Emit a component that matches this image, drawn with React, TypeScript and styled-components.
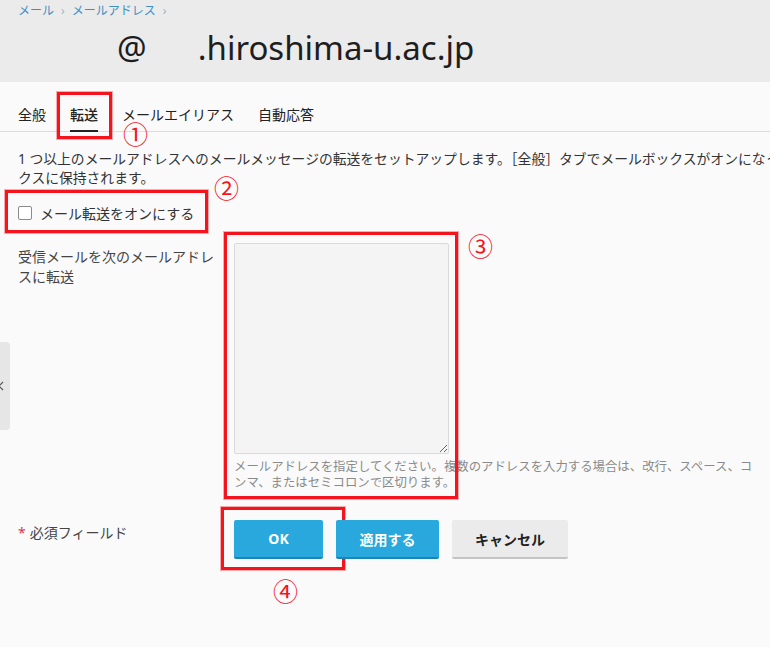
import React from 'react'
import styled, { createGlobalStyle } from 'styled-components';

const jp = `"Noto Sans", "Noto Sans CJK JP", sans-serif`;
const red = '#f5141e';
const blue = '#28a8dc';

const GlobalStyle = createGlobalStyle`
  html, body {
    margin: 0;
    padding: 0;
    background: #fafafa;
    overflow: hidden;
  }
  body {
    font-family: ${jp};
    color: #333;
  }
`;

const PageWrapper = styled.div`
  position: relative;
  width: 770px;
  height: 647px;
  overflow: hidden;
`;

const Header = styled.div`
  background: #ebebeb;
  height: 82px;
  padding: 3px 18px 0;
  box-sizing: border-box;
`;

const Breadcrumb = styled.div`
  display: flex;
  gap: 7px;
  font-size: 12px;
  line-height: 16px;
  color: #3f8fc4;
`;

const Crumb = styled.span<{ $sep?: boolean }>`
  color: ${p => p.$sep ? '#9ab4c8' : '#3f8fc4'};
`;

const Title = styled.h1`
  margin: 9px 0 0 99px;
  font-family: "Noto Sans", sans-serif;
  font-weight: 400;
  font-size: 33px;
  line-height: 40px;
  color: #1e1e1e;
  display: flex;
`;

const Hidden = styled.span<{ $w: number }>`
  display: inline-block;
  width: ${p => p.$w}px;
`;

const TabBar = styled.div`
  display: flex;
  gap: 24px;
  margin-top: 23px;
  padding: 0 18px;
  border-bottom: 1px solid #dcdcdc;
`;

const Tab = styled.div<{ $active?: boolean }>`
  position: relative;
  font-size: 14px;
  line-height: 20px;
  padding-bottom: 5px;
  margin-bottom: -1px;
  color: #222;
  font-weight: ${p => p.$active ? 500 : 400};
  border-bottom: 2px solid ${p => p.$active ? '#222' : 'transparent'};
`;

const Mark = styled.div<{ $t: number; $l: number; $r: number; $b: number }>`
  position: absolute;
  top: ${p => p.$t}px;
  left: ${p => p.$l}px;
  right: ${p => p.$r}px;
  bottom: ${p => p.$b}px;
  border: 3px solid ${red};
  box-shadow: 0 0 0 1px rgba(245, 20, 30, 0.35);
  pointer-events: none;
`;

const Num = styled.span<{ $x: number; $y: number }>`
  position: absolute;
  left: ${p => p.$x}px;
  top: ${p => p.$y}px;
  font-family: "Noto Sans CJK JP", sans-serif;
  font-size: 25px;
  line-height: 26px;
  color: ${red};
  font-weight: 400;
  white-space: nowrap;
`;

const Content = styled.div`
  padding: 0 18px;
`;

const Description = styled.p`
  margin: 17px 0 0;
  font-size: 13.8px;
  line-height: 19px;
  color: #333;
  white-space: nowrap;
`;

const CheckRow = styled.label`
  position: relative;
  display: flex;
  align-items: center;
  gap: 8px;
  margin-top: 16px;
  height: 20px;
  font-size: 14px;
  color: #333;
  width: fit-content;
`;

const Box = styled.span`
  width: 12px;
  height: 12px;
  border: 1px solid #8a8a8a;
  border-radius: 2px;
  background: #fff;
`;

const FormRow = styled.div<{ $mt: number }>`
  display: grid;
  grid-template-columns: 216px 1fr;
  margin-top: ${p => p.$mt}px;
`;

const FieldLabel = styled.div<{ $pt: number }>`
  padding-top: ${p => p.$pt}px;
  width: 198px;
  font-size: 14px;
  line-height: 20px;
  color: #444;
`;

const Req = styled.span`
  color: #d9364a;
  margin-right: 4px;
`;

const Field = styled.div`
  position: relative;
  width: 520px;
`;

const TextArea = styled.textarea`
  display: block;
  width: 215px;
  height: 211px;
  box-sizing: border-box;
  background: #f4f4f4;
  border: 1px solid #dadada;
  border-radius: 2px;
  resize: vertical;
  margin: 0;
`;

const Help = styled.div`
  margin-top: 5px;
  font-size: 12.4px;
  line-height: 16px;
  color: #8a8a8a;
`;

const Buttons = styled.div`
  display: flex;
  gap: 13px;
`;

const Button = styled.button<{ $primary?: boolean; $w: number }>`
  position: relative;
  width: ${p => p.$w}px;
  height: 39px;
  box-sizing: border-box;
  border: none;
  border-radius: 2px;
  font-family: ${jp};
  font-size: 14px;
  font-weight: 700;
  color: ${p => p.$primary ? '#fff' : '#222'};
  background: ${p => p.$primary ? blue : '#ebebeb'};
  border-bottom: 2px solid ${p => p.$primary ? '#1a86b8' : '#c4c4c4'};
  padding: 0;
`;

const SideHandle = styled.div`
  position: absolute;
  left: 0;
  top: 342px;
  width: 10px;
  height: 88px;
  background: #e6e6e6;
  border-radius: 0 4px 4px 0;
  display: flex;
  align-items: center;
  overflow: hidden;
`;

const App = () => {
  return (
    <>
      <GlobalStyle />
      <PageWrapper>
        <Header>
          <Breadcrumb>
            <Crumb>メール</Crumb>
            <Crumb $sep>›</Crumb>
            <Crumb>メールアドレス</Crumb>
            <Crumb $sep>›</Crumb>
          </Breadcrumb>
          <Title>
            <span>@</span>
            <Hidden $w={51} />
            <span>.hiroshima-u.ac.jp</span>
          </Title>
        </Header>

        <TabBar>
          <Tab>全般</Tab>
          <Tab $active>
            転送
            <Mark $t={-13} $l={-13} $r={-14} $b={-9} />
            <Num $x={53} $y={15}>①</Num>
          </Tab>
          <Tab>メールエイリアス</Tab>
          <Tab>自動応答</Tab>
        </TabBar>

        <Content>
          <Description>
            1 つ以上のメールアドレスへのメールメッセージの転送をセットアップします。［全般］タブでメールボックスがオンになっている場合は、メッセージのコピーがメールボッ<br />
            クスに保持されます。
          </Description>

          <CheckRow>
            <Box />
            メール転送をオンにする
            <Mark $t={-13} $l={-13} $r={-14} $b={-10} />
            <Num $x={196} $y={-29}>②</Num>
          </CheckRow>

          <FormRow $mt={20}>
            <FieldLabel $pt={4}>受信メールを次のメールアドレスに転送</FieldLabel>
            <Field>
              <TextArea />
              <Help>メールアドレスを指定してください。複数のアドレスを入力する場合は、改行、スペース、コンマ、またはセミコロンで区切ります。</Help>
              <Mark $t={-11} $l={-10} $r={296} $b={-8} />
              <Num $x={234} $y={-11}>③</Num>
            </Field>
          </FormRow>

          <FormRow $mt={29}>
            <FieldLabel $pt={3}><Req>*</Req>必須フィールド</FieldLabel>
            <Buttons>
              <Button $primary $w={89}>
                OK
                <Mark $t={-13} $l={-13} $r={-22} $b={-13} />
                <Num $x={39} $y={57}>④</Num>
              </Button>
              <Button $primary $w={103}>適用する</Button>
              <Button $w={116}>キャンセル</Button>
            </Buttons>
          </FormRow>
        </Content>

        <SideHandle>
          <svg width="6" height="10" viewBox="0 0 6 10" style={{ marginLeft: -2 }}>
            <path d="M5 1 L1 5 L5 9" stroke="#555" strokeWidth="1.2" fill="none" />
          </svg>
        </SideHandle>
      </PageWrapper>
    </>
  );
}

export default App
